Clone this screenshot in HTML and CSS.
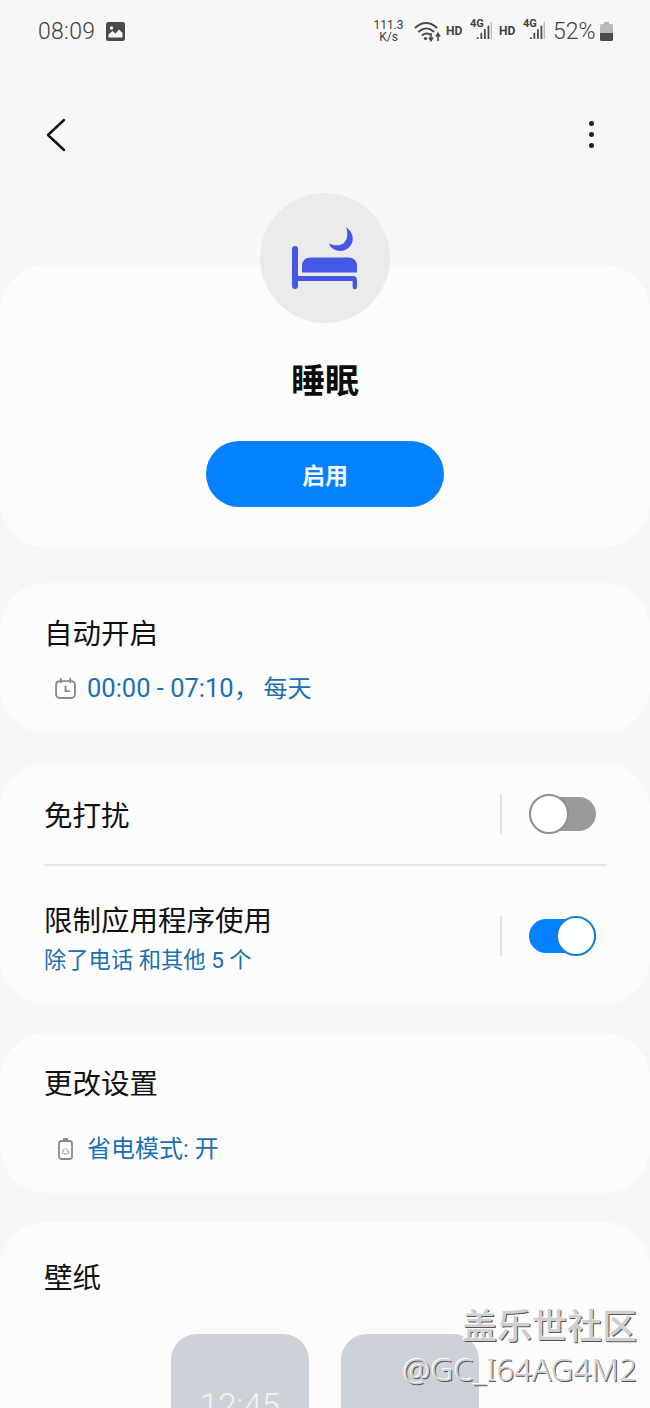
FILE: index.html
```html
<!DOCTYPE html>
<html lang="zh-CN">
<head>
<meta charset="utf-8">
<title>睡眠</title>
<link rel="stylesheet" href="styles.css">
</head>
<body>
<div class="page">
  <header class="status">
    <div class="status-left">
      <span class="clock">08:09</span>
      <svg class="pic" viewBox="0 0 19 19"><rect width="19" height="19" rx="2.5" fill="#4a4a4a"/><path d="M2.5 15.5v-3l4-3.500 3 2.500 3.500-4 3.500 3.500v4.500z" fill="#f7f7f7"/><circle cx="5.500" cy="6" r="1.700" fill="#f7f7f7"/></svg>
    </div>
    <div class="status-right">
      <span class="speed">111.3<br>K/s</span>
      <svg class="wifi" viewBox="0 0 27 21"><g fill="none" stroke="#4a4a4a" stroke-width="2" stroke-linecap="round"><path d="M1.500 6.500C8 .5 16 .5 22.500 6.500"/><path d="M5 10.500C9.500 6.500 15 6.500 19.500 10.500"/><path d="M8.500 14c2.500-2 5-2 7.500-.5"/></g><circle cx="11.500" cy="17.500" r="1.600" fill="#4a4a4a"/><path d="M17 12v7M15 16.500l2 3 2-3M24 20v-7M22 15.500l2-3 2 3" fill="none" stroke="#4a4a4a" stroke-width="1.600"/></svg>
      <span class="hd">HD</span>
      <span class="net"><i>4G</i><svg class="bars" viewBox="0 0 18 22"><g fill="#4a4a4a"><rect x="1" y="18" width="2" height="2"/><rect x="5" y="13" width="2" height="7"/><rect x="9" y="9" width="2" height="11"/><rect x="13" y="5" width="2" height="15"/></g><rect x="16.500" y="1" width="1.500" height="19" fill="#bdbdbd"/></svg></span>
      <span class="hd hd-second">HD</span>
      <span class="net net-second"><i>4G</i><svg class="bars" viewBox="0 0 18 22"><g fill="#4a4a4a"><rect x="1" y="18" width="2" height="2"/><rect x="5" y="13" width="2" height="7"/><rect x="9" y="9" width="2" height="11"/><rect x="13" y="5" width="2" height="15"/></g><rect x="16.500" y="1" width="1.500" height="19" fill="#bdbdbd"/></svg></span>
      <span class="batt-text">52%</span>
      <svg class="batt" viewBox="0 0 13 19"><path d="M4 0h5v2h2.500q1.500 0 1.500 1.500V11H0V3.500Q0 2 1.500 2H4z" fill="#b9b9b9"/><path d="M0 11h13v6.500q0 1.500-1.500 1.500h-10Q0 19 0 17.500z" fill="#4a4a4a"/></svg>
    </div>
  </header>

  <nav class="toolbar">
    <svg class="back" viewBox="0 0 20 34"><path d="M18 2 2 17l16 15" fill="none" stroke="#111" stroke-width="2.400" stroke-linecap="round" stroke-linejoin="round"/></svg>
    <div class="more"><span></span><span></span><span></span></div>
  </nav>

  <div class="avatar">
    <svg class="bed" viewBox="292 227 66 63"><g fill="#4558e4"><rect x="292" y="246" width="6" height="43" rx="3"/><path d="M302 272.500v-6q0-9 9-9h37q9 0 9 9v6z"/><path d="M296 276h57q4 0 4 4v7a2.200 2.200 0 0 1-4.400 0v-6h-56.600z"/><path d="M346 227C352 231 354 238 352 243 349 250 342 252 337 250.500 333 249.500 330 247 329 243.500 334 246 340 246 344 243 348 239 348 232 346 227z"/></g></svg>
  </div>

  <section class="card hero">
    <h1 class="hero-title">睡眠</h1>
    <button class="enable">启用</button>
  </section>

  <section class="card auto">
    <div class="title">自动开启</div>
    <div class="info info-time">
      <svg class="info-icon" viewBox="0 0 20 20"><g fill="none" stroke="#8a8a8a" stroke-width="1.800" stroke-linecap="round"><rect x="1" y="3" width="18" height="16" rx="3.500"/><path d="M5.500 1v3M14.500 1v3M10 8v4.500h3.500"/></g></svg>
      <span>00:00 - 07:10， <span class="cn-small">每天</span></span>
    </div>
  </section>

  <section class="card toggles">
    <div class="row row-dnd">
      <div class="row-text"><div class="title">免打扰</div></div>
      <div class="sep"></div>
      <div class="switch off"><span class="knob"></span></div>
    </div>
    <div class="divider"></div>
    <div class="row row-limit">
      <div class="row-text row-text-two">
        <div class="title">限制应用程序使用</div>
        <div class="sub">除了电话 和其他 5 个</div>
      </div>
      <div class="sep"></div>
      <div class="switch on"><span class="knob"></span></div>
    </div>
  </section>

  <section class="card change">
    <div class="title">更改设置</div>
    <div class="info info-save">
      <svg class="save-icon" viewBox="0 0 15 22"><g fill="none" stroke="#8a8a8a"><rect x="1" y="3" width="13" height="18" rx="2.500" stroke-width="1.800"/><path d="M5 1.200h5" stroke-width="2.200"/><path d="M6.500 10.500l-2.300 4 1.300 1.500M8.500 10.500l2.300 4-1.300 1.500M6 16h3" stroke-width="1"/></g></svg>
      <span>省电模式: 开</span>
    </div>
  </section>

  <section class="card wall">
    <div class="title">壁纸</div>
    <div class="thumbs">
      <div class="thumb"><span>12:45</span></div>
      <div class="thumb"></div>
    </div>
  </section>

  <div class="mark"><div class="mark-cn">盖乐世社区</div><div class="mark-id">@GC_I64AG4M2</div></div>
</div>
</body>
</html>
```
FILE: styles.css
```css
* { box-sizing: border-box; }
html, body { margin: 0; padding: 0; }
body { width: 650px; height: 1408px; overflow: hidden; background: #f7f7f7; font-family: Roboto, "Noto Sans CJK SC", sans-serif; color: #111; }
.page { position: relative; width: 650px; height: 1408px; overflow: hidden; display: flex; flex-direction: column; }

.status { height: 62px; flex: none; display: flex; justify-content: space-between; align-items: center; padding: 0 37px 0 38px; color: #404040; }
.status-left { display: flex; align-items: center; gap: 11px; }
.clock { font-size: 23px; font-weight: 300; letter-spacing: .3px; }
.pic { width: 19px; height: 19px; }
.status-right { display: flex; align-items: center; }
.speed { font-size: 12px; line-height: 12px; text-align: center; width: 33px; margin-right: 9px; }
.wifi { width: 27px; height: 21px; margin-right: 5px; }
.hd { flex: none; width: 16px; font-size: 12px; font-weight: 700; margin-right: 8px; white-space: nowrap; }
.net { position: relative; display: block; flex: none; width: 22px; height: 22px; margin-right: 7px; }
.hd-second { margin-right: 8px; }
.net-second { margin-right: 8px; }
.net i { position: absolute; left: 0; top: -3px; font-style: normal; font-size: 11px; font-weight: 700; }
.bars { position: absolute; right: 0; top: 0; width: 16px; height: 22px; }
.batt-text { flex: none; width: 41px; font-size: 23px; font-weight: 300; margin-right: 6px; white-space: nowrap; }
.batt { width: 13px; height: 19px; }

.toolbar { height: 131px; flex: none; display: flex; justify-content: space-between; align-items: flex-start; padding: 56px 56px 0 46px; }
.back { width: 20px; height: 34px; }
.more { display: flex; flex-direction: column; gap: 6px; padding-top: 3px; }
.more span { width: 5px; height: 5px; border-radius: 50%; background: #222; }

.avatar { position: relative; z-index: 1; flex: none; align-self: center; width: 130px; height: 130px; border-radius: 50%; background: #ebebeb; display: flex; align-items: center; justify-content: center; margin-bottom: -58px; }
.bed { width: 66px; height: 63px; }

.card { flex: none; background: #fcfcfc; border-radius: 46px; margin-bottom: 30px; }
.title { font-size: 28.500px; line-height: 36px; color: #111; }

.hero { height: 282px; display: flex; flex-direction: column; align-items: center; padding-top: 93px; margin-bottom: 36px; }
.hero-title { margin: 0; font-size: 34px; line-height: 46px; font-weight: 700; color: #0c0c0c; }
.enable { margin-top: 37px; width: 238px; height: 66px; border: 0; border-radius: 33px; background: #0381fe; color: #f4f9ff; font: 700 23px "Noto Sans CJK SC", sans-serif; }

.auto { height: 150px; padding: 34px 44px 0; }
.info { display: flex; align-items: center; font-size: 25.500px; color: #1a6fb0; }
.info-time { margin-top: 17px; padding-left: 11px; gap: 11px; line-height: 36px; }
.cn-small { font-size: 24px; margin-left: -2px; }
.info-icon { width: 21px; height: 21px; flex: none; }

.toggles { height: 241px; padding: 0 43px 0 44px; margin-bottom: 29px; }
.row { display: flex; align-items: center; }
.row-dnd { height: 101px; }
.row-limit { height: 139px; }
.row-text { flex: 1; min-width: 0; padding-top: 6px; }
.row-text-two { padding-top: 8px; }
.sub { font-size: 22.300px; line-height: 30px; color: #1a6fb0; margin-top: 5px; }
.divider { height: 2px; background: #e6e6e6; }
.sep { width: 2px; height: 40px; background: #e3e3e3; margin-right: 27px; }
.switch { position: relative; width: 67px; height: 34px; border-radius: 17px; margin-right: 11px; }
.off { background: #9a9a9a; }
.on { background: #0381fe; }
.knob { position: absolute; top: -3px; width: 40px; height: 40px; border-radius: 50%; background: #fff; border: 2px solid #8f8f8f; }
.off .knob { left: 0; }
.on .knob { right: 0; border-color: #1a7fd0; }

.change { height: 160px; padding: 34px 44px 0; margin-bottom: 29px; }
.info-save { margin-top: 28px; padding-left: 14px; gap: 14px; line-height: 36px; font-size: 24px; }
.save-icon { width: 15px; height: 22px; flex: none; }

.wall { height: 300px; padding: 39px 44px 0; margin-bottom: 0; }
.thumbs { display: flex; justify-content: center; gap: 32px; margin-top: 37px; }
.thumb { width: 138px; height: 200px; border-radius: 26px; background: #cdd2d9; color: #f1f3f5; text-align: center; font-size: 33px; font-weight: 300; padding-top: 52px; }

.mark { position: absolute; right: 13px; bottom: 18px; text-align: right; color: #cfcfcf; text-shadow: -1px -1px 0 #fff, 1px 1px 0 #555; }
.mark-cn { font-size: 35px; line-height: 46px; font-weight: 500; margin-bottom: 1px; font-family: "Noto Sans CJK SC", sans-serif; }
.mark-id { font-size: 31.500px; line-height: 42px; font-weight: 300; font-family: "Noto Sans", sans-serif; }
```
